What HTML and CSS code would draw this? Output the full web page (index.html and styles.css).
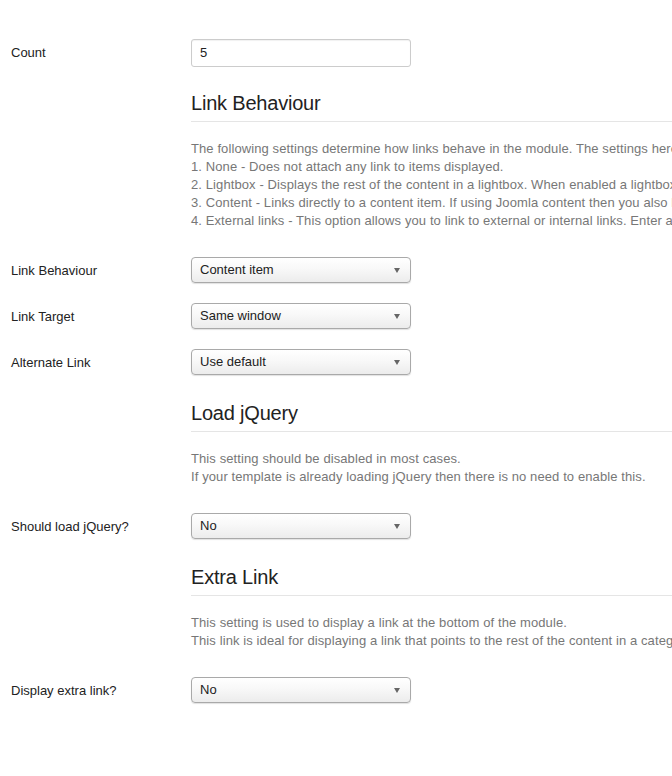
FILE: index.html
```html
<!DOCTYPE html>
<html>
<head>
<meta charset="utf-8">
<link rel="stylesheet" href="styles.css">
</head>
<body>
<div class="form">
  <div class="row row-first">
    <div class="label">Count</div>
    <div class="control"><div class="input">5</div></div>
  </div>

  <div class="section">
    <div class="legend">Link Behaviour</div>
    <div class="desc">
      <div>The following settings determine how links behave in the module. The settings here apply to all items displayed in the module.</div>
      <div>1. None - Does not attach any link to items displayed.</div>
      <div>2. Lightbox - Displays the rest of the content in a lightbox. When enabled a lightbox will open when clicking on an item.</div>
      <div>3. Content - Links directly to a content item. If using Joomla content then you also have the option to override the link.</div>
      <div>4. External links - This option allows you to link to external or internal links. Enter a link for each item.</div>
    </div>
  </div>
  <div class="row">
    <div class="label">Link Behaviour</div>
    <div class="control"><div class="select">Content item<span class="caret"></span></div></div>
  </div>
  <div class="row">
    <div class="label">Link Target</div>
    <div class="control"><div class="select">Same window<span class="caret"></span></div></div>
  </div>
  <div class="row">
    <div class="label">Alternate Link</div>
    <div class="control"><div class="select">Use default<span class="caret"></span></div></div>
  </div>

  <div class="section">
    <div class="legend">Load jQuery</div>
    <div class="desc">
      <div>This setting should be disabled in most cases.</div>
      <div>If your template is already loading jQuery then there is no need to enable this.</div>
    </div>
  </div>
  <div class="row">
    <div class="label">Should load jQuery?</div>
    <div class="control"><div class="select">No<span class="caret"></span></div></div>
  </div>

  <div class="section">
    <div class="legend">Extra Link</div>
    <div class="desc">
      <div>This setting is used to display a link at the bottom of the module.</div>
      <div>This link is ideal for displaying a link that points to the rest of the content in a category or a blog page.</div>
    </div>
  </div>
  <div class="row">
    <div class="label">Display extra link?</div>
    <div class="control"><div class="select">No<span class="caret"></span></div></div>
  </div>
</div>
</body>
</html>
```

FILE: styles.css
```css
html, body {
  margin: 0;
  padding: 0;
  background: #ffffff;
  overflow: hidden;
}
body {
  font-family: "Liberation Sans", Arial, Helvetica, sans-serif;
  font-size: 13px;
  color: #333333;
}
.form {
  padding: 39px 0 0 11px;
  width: 1200px;
}
.row {
  display: flex;
  align-items: center;
  margin-bottom: 20px;
}
.row-first {
  margin-bottom: 18px;
}
.row-first .label {
  margin-top: -2px;
}
.label {
  width: 180px;
  color: #222222;
}
.control {
  flex: none;
}
.input {
  box-sizing: border-box;
  width: 220px;
  height: 28px;
  border: 1px solid #cccccc;
  border-radius: 3px;
  padding: 0 8px;
  line-height: 26px;
  color: #222;
  box-shadow: inset 0 1px 1px rgba(0,0,0,0.06);
}
.select {
  position: relative;
  box-sizing: border-box;
  width: 220px;
  height: 26px;
  border: 1px solid #a9a9a9;
  border-radius: 4px;
  padding: 0 8px;
  line-height: 24px;
  color: #222;
  background: linear-gradient(#ffffff 0%, #f8f8f8 45%, #ececec 100%);
  box-shadow: 0 1px 1px rgba(0,0,0,0.12);
}
.caret {
  position: absolute;
  right: 10px;
  top: 10px;
  width: 0;
  height: 0;
  border-left: 3.5px solid transparent;
  border-right: 3.5px solid transparent;
  border-top: 5px solid #666666;
}
.section {
  margin-left: 180px;
}
.legend {
  font-size: 20px;
  line-height: 36px;
  color: #222222;
  border-bottom: 1px solid #e5e5e5;
  margin-bottom: 18px;
  white-space: nowrap;
  letter-spacing: -0.2px;
}
.desc {
  color: #777777;
  line-height: 18px;
  white-space: nowrap;
  margin-bottom: 27px;
  letter-spacing: 0.1px;
}
```
